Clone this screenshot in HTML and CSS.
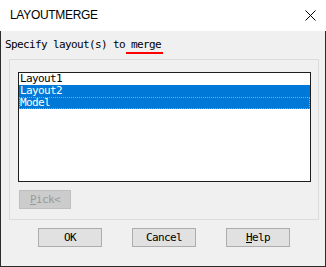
FILE: index.html
```html
<!DOCTYPE html>
<html lang="en">
<head>
    <meta charset="UTF-8">
    <title>LAYOUTMERGE</title>
    <link rel="stylesheet" href="styles.css">
</head>
<body>
    <div class="dialog">
        <div class="titlebar">
            <span class="title">LAYOUTMERGE</span>
            <svg class="close" width="11" height="11" viewBox="0 0 11 11">
                <path d="M0.5 0.5 L10.5 10.5 M10.5 0.5 L0.5 10.5" stroke="#000" stroke-width="1" fill="none"/>
            </svg>
        </div>

        <div class="content">
            <div class="prompt">Specify layout(s) to <span class="mark">merge</span></div>

            <div class="group">
                <ul class="listbox">
                    <li>Layout1</li>
                    <li class="selected">Layout2</li>
                    <li class="selected focused">Model</li>
                </ul>
                <button class="btn pick" disabled><u>P</u>ick&lt;</button>
            </div>

            <div class="actions">
                <button class="btn">OK</button>
                <button class="btn">Cancel</button>
                <button class="btn"><u>H</u>elp</button>
            </div>
        </div>
    </div>
</body>
</html>
```

FILE: styles.css
```css
body {
    margin: 0;
    background: #f0f0f0;
}
.dialog {
    width: 326px;
    height: 267px;
    box-sizing: border-box;
}
.titlebar {
    height: 31px;
    background: #fff;
    display: flex;
    align-items: center;
    justify-content: space-between;
    padding: 0 10px 0 10px;
    box-sizing: border-box;
}
.title {
    font-family: "Liberation Sans", Arial, sans-serif;
    font-size: 12px;
    letter-spacing: -0.3px;
    color: #000;
    margin-top: -1px;
}
.close {
    display: block;
    margin-top: -1px;
}
.content {
    height: 236px;
    box-sizing: border-box;
    background: #f0f0f0;
    border: 1px solid #2b2b2b;
    border-top: none;
    padding-top: 8px;
    font-family: "DejaVu Sans Mono", "Liberation Mono", monospace;
    font-size: 11px;
    letter-spacing: -0.62px;
}
.prompt {
    line-height: 12px;
    padding-left: 4px;
    color: #000;
}
.mark {
    position: relative;
}
.mark::after {
    content: "";
    position: absolute;
    left: -5px;
    right: -2px;
    top: 14px;
    height: 2px;
    background: #ff0000;
}
.group {
    margin: 8px 6px 0 8px;
    border: 1px solid #dcdcdc;
    padding: 12px 7px 10px 8px;
}
.listbox {
    list-style: none;
    margin: 0;
    padding: 0;
    height: 110px;
    box-sizing: border-box;
    border: 1px solid #1e1e1e;
    background: #fff;
}
.listbox li {
    line-height: 12px;
    height: 12px;
    padding-left: 1px;
    color: #000;
}
.listbox li.selected {
    background: #0078d7;
    color: #fff;
}
.listbox li.focused {
    outline: 1px dotted #ff8c28;
    outline-offset: -1px;
}
.btn {
    font-family: "DejaVu Sans Mono", "Liberation Mono", monospace;
    font-size: 11px;
    letter-spacing: -0.62px;
    height: 19px;
    width: 64px;
    padding: 0;
    background: #e1e1e1;
    border: 1px solid #adadad;
    color: #000;
}
.pick {
    display: block;
    width: 52px;
    margin: 8px 0 0 1px;
    background: #cccccc;
    border-color: #bfbfbf;
    color: #9a9a9a;
}
.actions {
    display: flex;
    justify-content: center;
    gap: 30px;
    margin-top: 8px;
    padding-left: 2px;
}
```
